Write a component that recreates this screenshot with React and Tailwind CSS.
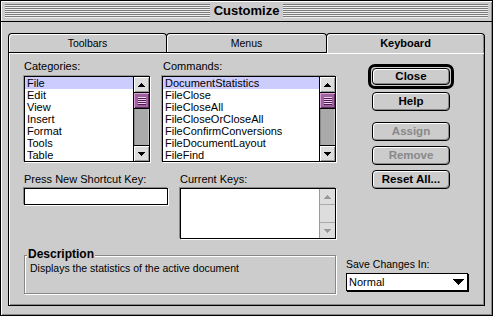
import React from "react";

const UpArrow = ({ color = "#000" }) => (
  <svg width="7" height="4" shapeRendering="crispEdges">
    <rect x="3" y="0" width="1" height="1" fill={color} />
    <rect x="2" y="1" width="3" height="1" fill={color} />
    <rect x="1" y="2" width="5" height="1" fill={color} />
    <rect x="0" y="3" width="7" height="1" fill={color} />
  </svg>
);

const DownArrow = ({ color = "#000" }) => (
  <svg width="7" height="4" shapeRendering="crispEdges">
    <rect x="0" y="0" width="7" height="1" fill={color} />
    <rect x="1" y="1" width="5" height="1" fill={color} />
    <rect x="2" y="2" width="3" height="1" fill={color} />
    <rect x="3" y="3" width="1" height="1" fill={color} />
  </svg>
);

const PopupArrow = () => (
  <svg width="11" height="6" shapeRendering="crispEdges">
    <rect x="0" y="0" width="11" height="1" fill="#000" />
    <rect x="1" y="1" width="9" height="1" fill="#000" />
    <rect x="2" y="2" width="7" height="1" fill="#000" />
    <rect x="3" y="3" width="5" height="1" fill="#000" />
    <rect x="4" y="4" width="3" height="1" fill="#000" />
    <rect x="5" y="5" width="1" height="1" fill="#000" />
  </svg>
);

function Stripes() {
  return (
    <div className="flex-1 flex flex-col">
      {[0, 1, 2, 3, 4, 5, 6].map((i) => (
        <div
          key={i}
          className="h-[2px] border-t border-t-[#7a7a7a] border-b border-b-[#f0f0f0]"
        />
      ))}
    </div>
  );
}

function ScrollBar() {
  return (
    <div className="w-[16px] shrink-0 border-l border-black flex flex-col">
      <div className="h-[16px] border-b border-black bg-[#dddddd] shadow-[inset_1px_1px_0_#fff,inset_-1px_-1px_0_#999] flex items-center justify-center">
        <UpArrow />
      </div>
      <div className="h-[16px] border-b border-black bg-[#9c639c] shadow-[inset_1px_1px_0_#d9a0d9,inset_-1px_-1px_0_#5e2a5e] flex items-center justify-center">
        <div className="flex flex-col w-[8px]">
          {[0, 1, 2, 3].map((i) => (
            <div
              key={i}
              className="h-[2px] border-t border-t-[#f2cdf2] border-b border-b-[#4a1a4a]"
            />
          ))}
        </div>
      </div>
      <div className="flex-1 bg-[#aaaaaa] shadow-[inset_1px_0_0_#888,inset_-1px_0_0_#c4c4c4]" />
      <div className="h-[16px] border-t border-black bg-[#dddddd] shadow-[inset_1px_1px_0_#fff,inset_-1px_-1px_0_#999] flex items-center justify-center">
        <DownArrow />
      </div>
    </div>
  );
}

function DisabledScrollBar() {
  return (
    <div className="w-[16px] shrink-0 border-l border-[#999] bg-[#dddddd] flex flex-col">
      <div className="h-[16px] border-b border-[#aaaaaa] flex items-center justify-center">
        <UpArrow color="#999" />
      </div>
      <div className="flex-1" />
      <div className="h-[16px] border-t border-[#aaaaaa] flex items-center justify-center">
        <DownArrow color="#999" />
      </div>
    </div>
  );
}

function ListBox({ items, className }) {
  return (
    <div
      className={`h-[86px] border border-black bg-white flex shadow-[1px_1px_0_#fff,-1px_-1px_0_#999] ${className}`}
    >
      <div className="flex-1 flex flex-col overflow-hidden">
        {items.map((t, i) => (
          <div
            key={t}
            className={
              i === 0
                ? "h-[12px] leading-[12px] pl-[2px] text-[11px] whitespace-nowrap bg-[#ccccff]"
                : "h-[12px] leading-[12px] pl-[2px] text-[11px] whitespace-nowrap"
            }
          >
            {t}
          </div>
        ))}
      </div>
      <ScrollBar />
    </div>
  );
}

function Button({ children, disabled, small, className = "" }) {
  return (
    <div
      className={`w-[78px] ${small ? "h-[17px]" : "h-[19px]"} rounded-[4px] border border-black bg-[#cccccc] shadow-[inset_1px_1px_0_#fff,inset_-1px_-1px_0_#888] flex items-center justify-center text-[11.5px] font-bold leading-none ${
        disabled ? "text-[#888888]" : "text-black"
      } ${className}`}
    >
      {children}
    </div>
  );
}

export default function App() {
  return (
    <div className="w-[493px] h-[316px] bg-[#cccccc] border border-black shadow-[inset_1px_1px_0_#fff,inset_-1px_-1px_0_#888] flex flex-col overflow-hidden font-['Liberation_Sans',Arial,sans-serif] text-black select-none">
      {/* Title bar */}
      <div className="h-[21px] shrink-0 border-b border-black flex items-start pt-[3px] px-[4px] shadow-[inset_1px_1px_0_#fff]">
        <Stripes />
        <div className="px-[4px] h-[14px] leading-[14px] text-[13px] font-bold">
          Customize
        </div>
        <Stripes />
      </div>

      {/* Body */}
      <div className="flex-1 flex flex-col pt-[11px] px-[7px] pb-[9px]">
        {/* Tabs */}
        <div className="flex h-[19px] shrink-0">
          <div className="w-[159px] h-[19px] rounded-t-[4px] border-t border-l border-r border-black bg-[#cccccc] shadow-[inset_1px_1px_0_#fff] flex justify-center pt-[2px] text-[10.5px] leading-[14px]">
            Toolbars
          </div>
          <div className="w-[161px] -ml-px h-[19px] rounded-t-[4px] border-t border-l border-r border-black bg-[#cccccc] shadow-[inset_1px_1px_0_#fff] flex justify-center pt-[2px] text-[10.5px] leading-[14px]">
            Menus
          </div>
          <div className="relative z-10 w-[159px] -ml-px h-[20px] -mb-px rounded-t-[4px] border-t border-l border-r border-black bg-[#cccccc] shadow-[inset_1px_1px_0_#fff,inset_-1px_0_0_#888] flex justify-center pt-[2px] text-[11px] font-bold leading-[14px]">
            Keyboard
          </div>
        </div>

        {/* Panel */}
        <div className="flex-1 border border-black bg-[#cccccc] shadow-[inset_1px_1px_0_#fff,inset_-1px_-1px_0_#888] flex pl-[15px]">
          {/* Left area */}
          <div className="w-[312px] flex flex-col pt-[6px]">
            <div className="flex gap-[12px]">
              <div className="w-[126px] flex flex-col">
                <div className="h-[14px] leading-[14px] text-[11px]">Categories:</div>
                <ListBox
                  className="mt-[3px] w-[126px]"
                  items={["File", "Edit", "View", "Insert", "Format", "Tools", "Table"]}
                />
              </div>
              <div className="w-[174px] flex flex-col">
                <div className="h-[14px] leading-[14px] text-[11px] pl-px">Commands:</div>
                <ListBox
                  className="mt-[3px] w-[174px]"
                  items={[
                    "DocumentStatistics",
                    "FileClose",
                    "FileCloseAll",
                    "FileCloseOrCloseAll",
                    "FileConfirmConversions",
                    "FileDocumentLayout",
                    "FileFind",
                  ]}
                />
              </div>
            </div>

            <div className="flex gap-[12px] mt-[10px]">
              <div className="w-[144px] flex flex-col">
                <div className="h-[14px] leading-[14px] text-[11px]">Press New Shortcut Key:</div>
                <div className="mt-[2px] w-[144px] h-[17px] bg-white border border-black shadow-[-1px_-1px_0_#888,1px_1px_0_#fff]" />
              </div>
              <div className="w-[156px] flex flex-col">
                <div className="h-[14px] leading-[14px] text-[11px]">Current Keys:</div>
                <div className="mt-[2px] w-[156px] h-[51px] bg-white border border-black flex shadow-[-1px_-1px_0_#888,1px_1px_0_#fff]">
                  <div className="flex-1" />
                  <DisabledScrollBar />
                </div>
              </div>
            </div>

            <div className="relative mt-[16px] h-[39px] border border-[#888888] shadow-[inset_1px_1px_0_#fff,1px_1px_0_#fff] pl-[5px] pt-[6px]">
              <div className="absolute left-[2px] top-[-9px] bg-[#cccccc] px-px h-[14px] leading-[14px] text-[12px] font-bold">
                Description
              </div>
              <div className="text-[10.5px] leading-[12px] whitespace-nowrap">
                Displays the statistics of the active document
              </div>
            </div>
          </div>

          {/* Right column */}
          <div className="w-[123px] ml-[10px] flex flex-col pt-[11px]">
            <div className="pl-[22px] flex flex-col items-start">
              <div className="border-[3px] border-black rounded-[7px] p-px">
                <Button small>Close</Button>
              </div>
              <Button className="mt-[3px] ml-[4px]">Help</Button>
              <Button className="mt-[11px] ml-[4px]" disabled>
                Assign
              </Button>
              <Button className="mt-[5px] ml-[4px]" disabled>
                Remove
              </Button>
              <Button className="mt-[5px] ml-[4px]">Reset All...</Button>
            </div>
            <div className="mt-[68px] h-[14px] leading-[14px] text-[10.5px] whitespace-nowrap">
              Save Changes In:
            </div>
            <div className="mt-[2px] w-[122px] h-[18px] bg-white border border-black shadow-[1px_1px_0_#000] flex items-center justify-between pl-[2px] pr-[3px]">
              <span className="text-[11px] leading-none">Normal</span>
              <PopupArrow />
            </div>
          </div>
        </div>
      </div>
    </div>
  );
}
